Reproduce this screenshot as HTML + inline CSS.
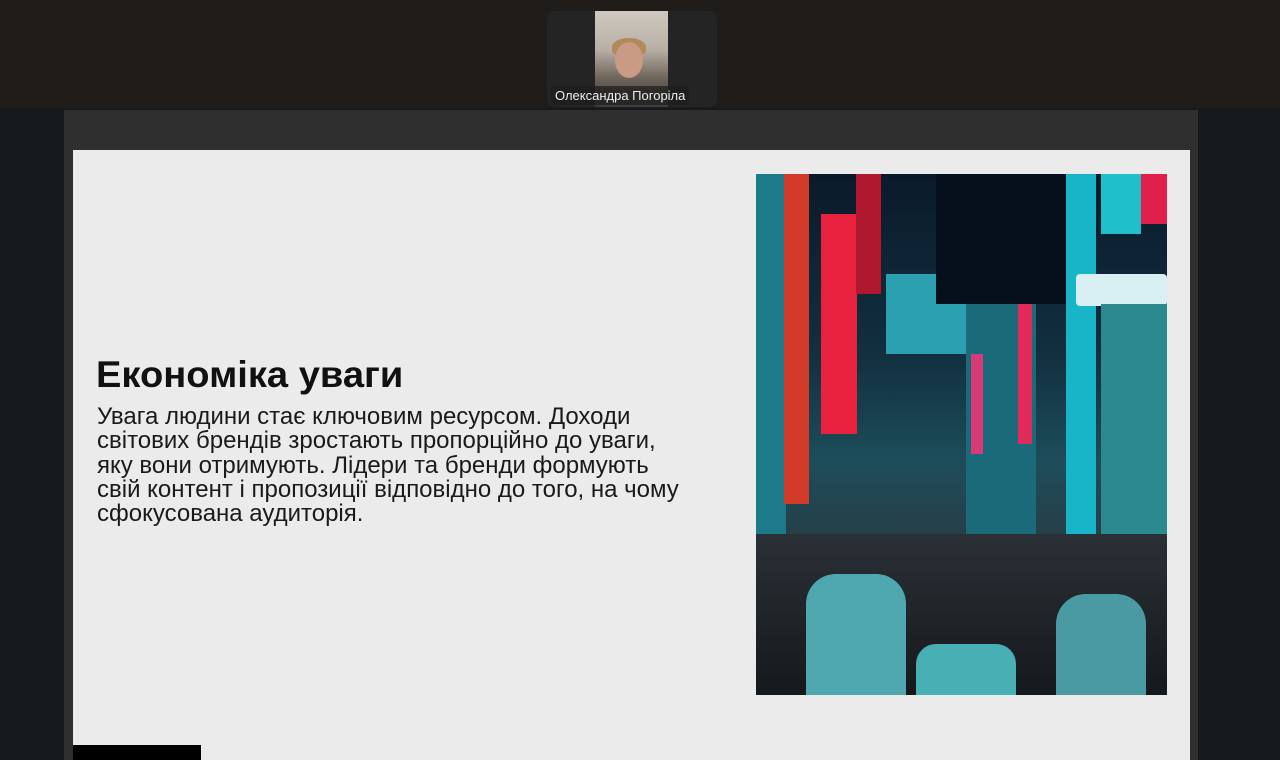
<!DOCTYPE html>
<html><head><meta charset="utf-8"><style>
*{margin:0;padding:0;box-sizing:border-box}
body{width:1280px;height:760px;background:#15181c;position:relative;overflow:hidden;font-family:"Liberation Sans",sans-serif}
.top{position:absolute;left:0;top:0;width:1280px;height:108px;background:#1f1c19}
.tile{position:absolute;left:547px;top:11px;width:170px;height:96px;background:#242424;border-radius:8px}
.cam{position:absolute;left:595px;top:11px;width:73px;height:96px;background:linear-gradient(180deg,#cfc9c0 0%,#b8b0a6 40%,#6e645a 70%,#3b3b3b 100%)}
.face{position:absolute;left:615px;top:42px;width:28px;height:36px;border-radius:50%;background:#c99a84}
.hair{position:absolute;left:612px;top:38px;width:34px;height:18px;border-radius:50% 50% 30% 30%;background:#b08a5a}
.name{position:absolute;left:551px;top:86px;height:19px;padding:0 4px;background:rgba(30,30,30,.75);color:#eee;font-size:13px;line-height:19px;border-radius:3px}
.frame{position:absolute;left:64px;top:110px;width:1134px;height:650px;background:#2f2f2f}
.slide{position:absolute;left:73px;top:150px;width:1117px;height:610px;background:#ebebeb}
h1{position:absolute;left:96px;top:354px;font-size:37px;font-weight:bold;color:#111;white-space:nowrap;transform:scaleX(1.03);transform-origin:left}
p{position:absolute;left:97px;top:405px;font-size:24px;line-height:24.3px;color:#1a1a1a;white-space:nowrap}
.img{position:absolute;left:756px;top:174px;width:411px;height:521px;overflow:hidden;background:linear-gradient(180deg,#0a1a2a 0%,#123040 35%,#1d4d5a 55%,#2a3a40 75%,#1b2228 100%)}
.img div{position:absolute}
.bar{position:absolute;left:73px;top:745px;width:128px;height:15px;background:#000}
</style></head><body>
<div class="top"></div>
<div class="tile"></div>
<div class="cam"></div><div class="hair"></div><div class="face"></div>
<div class="name">Олександра Погоріла</div>
<div class="frame"></div>
<div class="slide"></div>
<h1>Економіка уваги</h1>
<p>Увага людини стає ключовим ресурсом. Доходи<br>світових брендів зростають пропорційно до уваги,<br>яку вони отримують. Лідери та бренди формують<br>свій контент і пропозиції відповідно до того, на чому<br>сфокусована аудиторія.</p>
<div class="img">
<div style="left:0;top:0;width:30px;height:360px;background:#1c7a8a"></div>
<div style="left:28px;top:0;width:25px;height:330px;background:#d23a2a"></div>
<div style="left:65px;top:40px;width:36px;height:220px;background:#e8223e"></div>
<div style="left:100px;top:0;width:25px;height:120px;background:#b01830"></div>
<div style="left:130px;top:100px;width:80px;height:80px;background:#2aa0b0"></div>
<div style="left:180px;top:0;width:130px;height:130px;background:#06101c"></div>
<div style="left:210px;top:130px;width:70px;height:240px;background:#1a6a7a"></div>
<div style="left:215px;top:180px;width:12px;height:100px;background:#d83a78"></div>
<div style="left:262px;top:130px;width:14px;height:140px;background:#e02a5a"></div>
<div style="left:310px;top:0;width:30px;height:360px;background:#18b4c8"></div>
<div style="left:345px;top:0;width:40px;height:60px;background:#1fc0cc"></div>
<div style="left:385px;top:0;width:26px;height:50px;background:#e0204a"></div>
<div style="left:320px;top:100px;width:91px;height:32px;background:#d8f0f4;border-radius:4px"></div>
<div style="left:345px;top:130px;width:66px;height:230px;background:#2a8a90"></div>
<div style="left:0;top:360px;width:411px;height:161px;background:linear-gradient(180deg,#2a3036,#16191c)"></div>
<div style="left:50px;top:400px;width:100px;height:121px;background:#4fa8b0;border-radius:30px 30px 0 0"></div>
<div style="left:160px;top:470px;width:100px;height:51px;background:#46b0b4;border-radius:20px 20px 0 0"></div>
<div style="left:300px;top:420px;width:90px;height:101px;background:#4a9aa4;border-radius:30px 30px 0 0"></div>
</div>
<div class="bar"></div>
</body></html>
